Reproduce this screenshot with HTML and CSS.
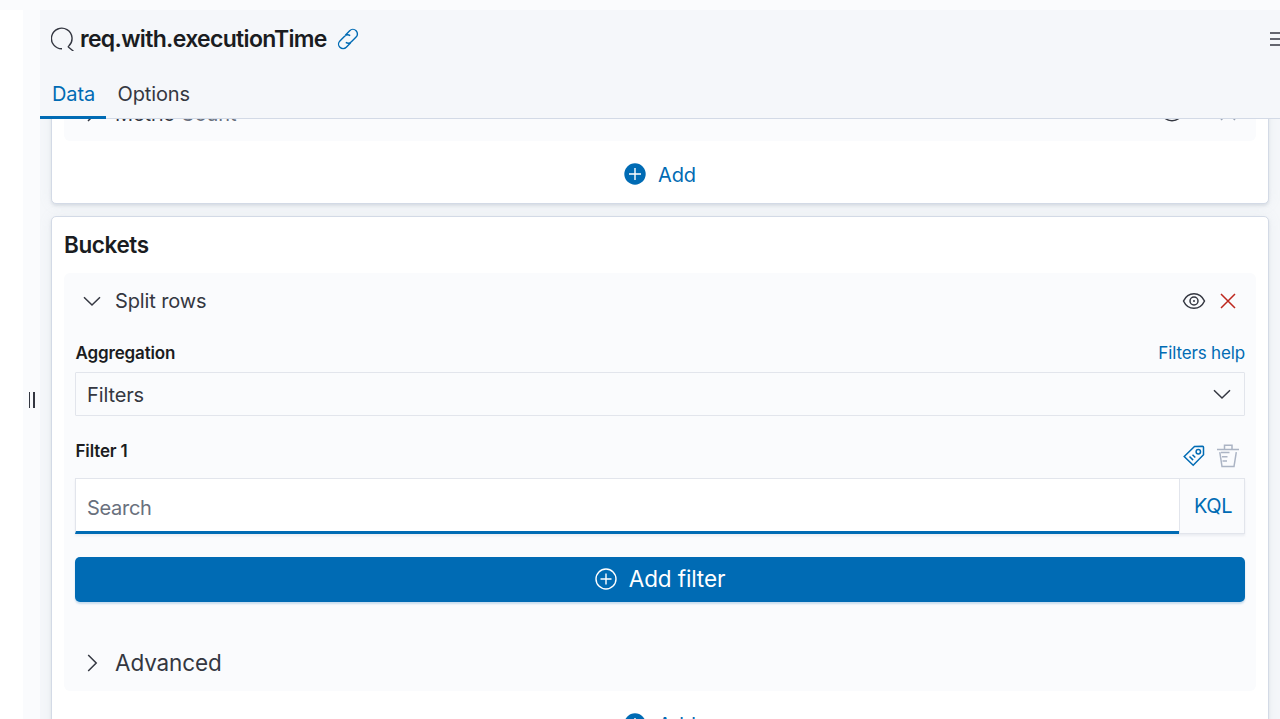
FILE: index.html
```html
<!DOCTYPE html>
<html lang="en">
<head>
<meta charset="utf-8">
<title>req.with.executionTime</title>
<link rel="stylesheet" href="styles.css">
</head>
<body>
<div class="canvas"></div>
<div class="resizer"><span class="resizer-bar"></span><span class="resizer-bar"></span></div>
<main class="panel">
  <header class="header">
    <div class="title-row">
      <svg class="icon-search" width="24" height="24" viewBox="0 0 24 24"><path d="M11 21.800a10.300 10.300 0 1 1 6.800-2.800q-.9.600-.2 1.200l4.900 4"/></svg>
      <h1 class="title">req.with.executionTime</h1>
      <svg class="icon-link" width="22" height="22" viewBox="0 0 22 22"><path d="M8.300 7.200l4.400-4.500a4.500 4.500 0 0 1 6.400 6.400l-4.700 4.700a4.500 4.500 0 0 1-5.600.6M13.700 14.800l-4.400 4.500a4.500 4.500 0 0 1-6.400-6.400l4.700-4.700a4.500 4.500 0 0 1 5.600-.6"/></svg>
      <svg class="icon-menu" width="15" height="14" viewBox="0 0 15 14"><path d="M0 1h15M0 7h15M0 13h15"/></svg>
    </div>
    <nav class="tabs">
      <a class="tab tab-active">Data</a>
      <a class="tab">Options</a>
    </nav>
  </header>
  <div class="scroll">
    <section class="card card-metrics">
      <div class="agg agg-metric">
        <svg class="icon" width="22" height="22" viewBox="0 0 22 22"><path d="M7 3l8 8-8 8"/></svg>
        <span class="agg-label">Metric <span class="muted">Count</span></span>
        <svg class="icon eye" width="24" height="18" viewBox="0 0 24 18"><path d="M1 9C6-1.300 18-1.300 23 9 18 19.300 6 19.300 1 9z"/></svg>
        <svg class="icon cross-muted" width="16" height="16" viewBox="0 0 16 16"><path d="M1 1l14 14M15 1L1 15"/></svg>
      </div>
      <div class="add">
        <svg width="22" height="22" viewBox="0 0 22 22"><circle class="disc" cx="11" cy="11" r="10.700"/><path class="plus" d="M11 5v12M5 11h12"/></svg>
        <span>Add</span>
      </div>
    </section>
    <section class="card card-buckets">
      <h2 class="card-title">Buckets</h2>
      <div class="agg agg-bucket">
        <div class="agg-head">
          <svg class="icon" width="22" height="22" viewBox="0 0 22 22"><path d="M3 7.300l8 7.700 8-7.700"/></svg>
          <span class="agg-label">Split rows</span>
          <svg class="icon eye" width="24" height="18" viewBox="0 0 24 18"><path d="M1.500 9C6-.8 18-.8 22.500 9 18 18.800 6 18.800 1.500 9z"/><circle cx="12" cy="9" r="4"/><circle class="pupil" cx="12" cy="9" r="1"/></svg>
          <svg class="icon cross" width="16" height="16" viewBox="0 0 16 16"><path d="M1 1l14 14M15 1L1 15"/></svg>
        </div>
        <div class="label-row">
          <label class="label">Aggregation</label>
          <a class="help">Filters help</a>
        </div>
        <div class="select">
          <span>Filters</span>
          <svg class="icon" width="22" height="22" viewBox="0 0 22 22"><path d="M3 6.300l8 7.700 8-7.700"/></svg>
        </div>
        <div class="filter-row">
          <label class="label">Filter 1</label>
          <svg class="icon tag" width="22" height="22" viewBox="0 0 22 22"><path d="M1.200 11.500L11.500 1.500l8-.3q1 0 1 1v7.500L10.200 20.300z"/><circle cx="15.300" cy="6.800" r="2.200"/><path d="M6.500 11.500l3.600 3.600M9.500 9.700l2.800 2.800"/></svg>
          <svg class="icon trash" width="22" height="24" viewBox="0 0 22 24"><path d="M0 5.600h22M7.500 5.500V1.200h7.500v4.300M2.800 8.200l2.200 14.300h12l2.300-14.300M4 8.500h8.500M5 12.700h5.500M5.500 17h4.500"/></svg>
        </div>
        <div class="query">
          <div class="search">Search</div>
          <div class="kql">KQL</div>
        </div>
        <div class="add-filter">
          <svg width="22" height="22" viewBox="0 0 22 22"><circle cx="11" cy="11" r="10"/><path d="M11 5.500v11M5.500 11h11"/></svg>
          <span>Add filter</span>
        </div>
        <div class="advanced">
          <svg class="icon" width="22" height="22" viewBox="0 0 22 22"><path d="M7.200 3l8 8-8 8"/></svg>
          <span>Advanced</span>
        </div>
      </div>
      <div class="add add-last">
        <svg width="22" height="22" viewBox="0 0 22 22"><circle class="disc" cx="11" cy="11" r="10.700"/><path class="plus" d="M11 5v12M5 11h12"/></svg>
        <span>Add</span>
      </div>
    </section>
  </div>
</main>
</body>
</html>
```
FILE: styles.css
```css
* { box-sizing: border-box; }
body {
  margin: 0;
  height: 719px;
  padding-top: 10px;
  display: flex;
  overflow: hidden;
  background: #fafbfd;
  color: #343741;
  font-family: Inter, "Liberation Sans", sans-serif;
  font-size: 20px;
  line-height: 24px;
  letter-spacing: -0.120px;
}
svg { flex: none; fill: none; }
.canvas { width: 23px; background: #fff; }
.resizer { width: 17px; display: flex; align-items: center; justify-content: center; gap: 3px; padding-top: 71px; }
.resizer-bar { width: 1.500px; height: 16px; background: #343741; }
.panel { flex: 1; min-width: 0; display: flex; flex-direction: column; background: #f5f7fa; }
.header { height: 109px; flex: none; display: flex; flex-direction: column; border-bottom: 1px solid #d3dae6; }
.title-row { height: 58px; flex: none; display: flex; align-items: center; padding-left: 11px; }
.title { margin: 0 0 0 5px; width: 247px; white-space: nowrap; color: #1a1c21; font-size: 23px; line-height: 30px; font-weight: 600; letter-spacing: -0.680px; }
.icon-search { stroke: #343741; stroke-width: 1.400; }
.icon-link { margin-left: 10px; stroke: #006bb4; stroke-width: 1.400; }
.icon-menu { margin-left: auto; margin-right: -5px; stroke: #343741; stroke-width: 1.500; }
.tabs { display: flex; flex: none; height: 51px; }
.tab { padding: 14px 12px 0; height: 51px; }
.tab-active { width: 66px; color: #006bb4; border-bottom: 3px solid #006bb4; }
.tab + .tab { padding-left: 11.500px; }
.scroll { flex: 1; min-height: 0; overflow: hidden; padding: 0 11px; display: flex; flex-direction: column; gap: 12px; }
.card { flex: none; padding: 0 12px; background: #fff; border: 1px solid #d3dae6; border-radius: 5px; box-shadow: 0 2px 3px rgba(152, 162, 179, .25), 0 0 14px rgba(152, 162, 179, .1); }
.card-metrics { margin-top: -61px; height: 146px; padding-top: 26px; }
.card-buckets { height: 540px; }
.agg { background: #fafbfd; border-radius: 6px; padding: 0 11px; }
.agg-metric { height: 56px; display: flex; align-items: center; padding: 0 20px 0 17px; }
.agg-metric .eye { margin-right: 36px; }
.agg-metric .agg-label { padding-top: 2px; }
.agg-label { margin-left: 12px; margin-right: auto; }
.muted { color: #69707d; }
.icon { stroke: #343741; stroke-width: 1.500; }
.cross { stroke: #bd271e; }
.cross-muted { stroke: #98a2b3; }
.pupil { fill: #343741; stroke: none; }
.add { height: 66px; display: flex; align-items: center; justify-content: center; gap: 12px; color: #006bb4; }
.add span { padding-top: 2px; }
.disc { fill: #006bb4; }
.plus { stroke: #fff; stroke-width: 1.400; }
.card-title { margin: 0; height: 56px; padding-top: 13px; color: #1a1c21; font-size: 22.500px; line-height: 30px; font-weight: 600; letter-spacing: -0.400px; }
.agg-bucket { height: 418px; }
.agg-head { height: 56px; display: flex; align-items: center; padding: 0 9px 0 6px; }
.agg-head .cross { margin-left: 14px; }
.label-row { height: 43px; display: flex; justify-content: space-between; padding-top: 12px; }
.label { font-size: 17px; font-weight: 600; color: #1a1c21; letter-spacing: -0.150px; padding-left: 0.500px; }
.help { font-size: 17px; color: #006bb4; letter-spacing: -0.150px; }
.select { height: 44px; display: flex; align-items: center; justify-content: space-between; padding: 1px 11px 0 11px; border: 1px solid #e2e5ec; border-radius: 1px; }
.filter-row { height: 62px; display: flex; align-items: flex-start; padding: 23px 6px 0 0; }
.filter-row .tag { margin: 6px 12px 0 auto; stroke: #006bb4; }
.filter-row .trash { margin-top: 5px; stroke: #abb4c4; }
.query { display: flex; height: 56px; box-shadow: 0 2px 2px rgba(152, 162, 179, .15); }
.search { flex: 1; padding: 17px 11px; background: #fff; border: 1px solid #e2e5ec; border-right: 0; border-bottom: 3px solid #006bb4; color: #69707d; letter-spacing: -0.300px; }
.kql { width: 66px; padding: 15px 0 0 2px; text-align: center; color: #006bb4; border: 1px solid #e2e5ec; letter-spacing: -0.400px; }
.add-filter { height: 45px; margin-top: 23px; padding-bottom: 1px; display: flex; align-items: center; justify-content: center; gap: 12px; border-radius: 5px; background: #006bb4; color: #fff; font-size: 22.500px; box-shadow: 0 2px 2px rgba(0, 107, 180, .2); }
.add-filter svg { stroke: #fff; stroke-width: 1.400; }
.advanced { height: 88px; padding: 34px 6px 0; display: flex; align-items: center; gap: 12px; font-size: 22.500px; }
```
